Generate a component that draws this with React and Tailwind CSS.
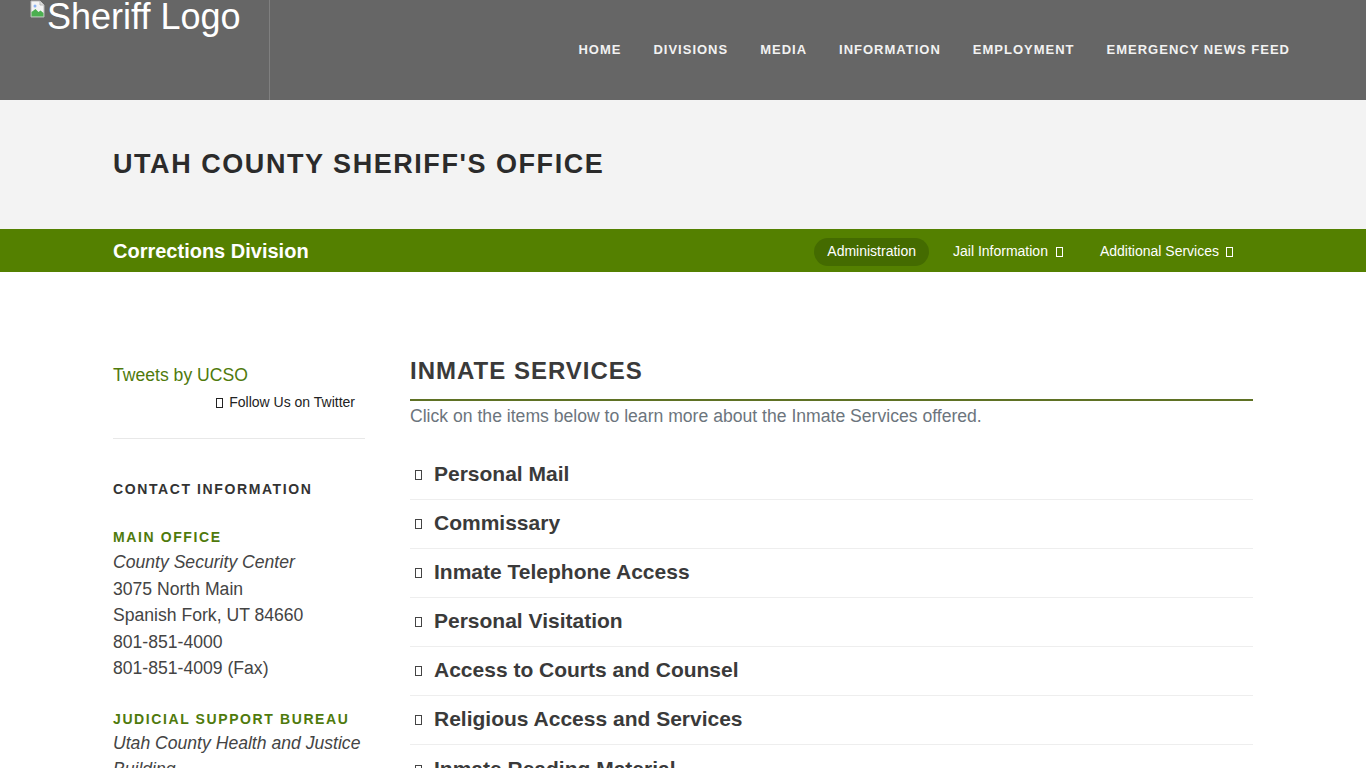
import { useState } from "react";

const navItems = ["HOME", "DIVISIONS", "MEDIA", "INFORMATION", "EMPLOYMENT", "EMERGENCY NEWS FEED"];

const services = [
    "Personal Mail",
    "Commissary",
    "Inmate Telephone Access",
    "Personal Visitation",
    "Access to Courts and Counsel",
    "Religious Access and Services",
    "Inmate Reading Material",
];

// missing font-icon glyph box
const Tofu = ({ className = "" }) => (
    <span className={"inline-block w-[7px] h-[10px] border border-current " + className} />
);

const BrokenImg = () => (
    <svg width="16" height="18" viewBox="0 0 16 18" className="shrink-0">
        <path d="M1 1h9l4 4v12H1z" fill="#f4f4f4" stroke="#b9b9b9" />
        <path d="M10 1v4h4" fill="#ddd" stroke="#b9b9b9" />
        <path d="M1.5 16.5V12l4-3 3 3 2-1.5 3 2.5v3.5z" fill="#4caf50" />
        <circle cx="5" cy="6" r="1.5" fill="#8ab4f8" />
    </svg>
);

const Header = () => (
    <header className="h-[100px] bg-[#666666] flex">
        <div className="w-[270px] shrink-0 border-r border-[#7f7f7f] flex items-start pl-[30px]">
            <BrokenImg />
            <span className="text-white text-[36px] leading-none -mt-[1px] ml-[1px]">Sheriff Logo</span>
        </div>
        <nav className="flex-1 flex justify-end items-center pr-[76px] gap-[32px]">
            {navItems.map((n) => (
                <a key={n} className="text-[#f2f2f2] text-[13px] font-bold tracking-[1px]">{n}</a>
            ))}
        </nav>
    </header>
);

export default function App() {
    const [open, setOpen] = useState(null);

    return (
        <div className="min-h-screen bg-white" style={{ fontFamily: '"Liberation Sans", Arial, sans-serif' }}>
            <Header />

            <div className="h-[129px] bg-[#f3f3f3] flex items-center px-[113px]">
                <h1 className="text-[27px] font-bold tracking-[1.55px] text-[#2b2b2b] leading-none">
                    UTAH COUNTY SHERIFF'S OFFICE
                </h1>
            </div>

            <div className="h-[43px] bg-[#548000] flex items-center justify-between pl-[113px] pr-[120px]">
                <h2 className="text-white text-[20px] font-bold">Corrections Division</h2>
                <ul className="flex items-center gap-[11px] text-white text-[14px] pt-[2px]">
                    <li className="bg-[#446b00] rounded-full px-[13px] h-[28px] flex items-center">Administration</li>
                    <li className="px-[13px] h-[28px] flex items-center gap-[8px]">Jail Information <Tofu className="mt-[1px]" /></li>
                    <li className="px-[13px] h-[28px] flex items-center gap-[7px]">Additional Services <Tofu className="mt-[1px]" /></li>
                </ul>
            </div>

            <div className="flex pl-[113px] pt-[88px] gap-[45px]">
                <aside className="w-[252px] shrink-0">
                    <a className="block text-[17.6px] text-[#4f7a0c] leading-[26px] mt-[2px]">Tweets by UCSO</a>
                    <div className="flex justify-end items-center gap-[6px] pr-[10px] text-[14px] text-[#222] mt-[4px]">
                        <Tofu className="mt-[1px]" /> Follow Us on Twitter
                    </div>
                    <hr className="border-[#e8e8e8] mt-[25px]" />
                    <h3 className="mt-[40px] text-[14px] font-bold tracking-[1.6px] text-[#333]">CONTACT INFORMATION</h3>
                    <h4 className="mt-[27px] text-[14px] font-bold tracking-[1.6px] text-[#4f7a0c]">MAIN OFFICE</h4>
                    <div className="text-[17.6px] leading-[26.5px] text-[#444] mt-[1px]">
                        <p className="italic">County Security Center</p>
                        <p>3075 North Main</p>
                        <p>Spanish Fork, UT 84660</p>
                        <p>801-851-4000</p>
                        <p>801-851-4009 (Fax)</p>
                    </div>
                    <h4 className="mt-[27px] text-[14px] font-bold tracking-[1.6px] text-[#4f7a0c]">JUDICIAL SUPPORT BUREAU</h4>
                    <div className="text-[17.6px] leading-[26.5px] text-[#444]">
                        <p className="italic">Utah County Health and Justice Building</p>
                    </div>
                </aside>

                <main className="w-[843px] shrink-0">
                    <h2 className="text-[24px] font-bold tracking-[1px] text-[#3a3a3a] leading-none mt-[-1px] pb-[16px] border-b-2 border-[#5f7124]">
                        INMATE SERVICES
                    </h2>
                    <p className="text-[17.6px] text-[#6c757d] mt-[2px] leading-[26px]">
                        Click on the items below to learn more about the Inmate Services offered.
                    </p>
                    <div className="mt-[22px]">
                        {services.map((s, i) => (
                            <button
                                key={s}
                                onClick={() => setOpen(open === i ? null : i)}
                                className={"w-full flex items-center h-[49px] text-left " + (i < services.length - 1 ? "border-b border-[#eeeeee]" : "")}
                            >
                                <Tofu className="ml-[5px] mr-[12px] text-[#444]" />
                                <span className="text-[21px] font-bold text-[#3a3a3a] mb-[2px]">{s}</span>
                            </button>
                        ))}
                    </div>
                </main>
            </div>
        </div>
    );
}
